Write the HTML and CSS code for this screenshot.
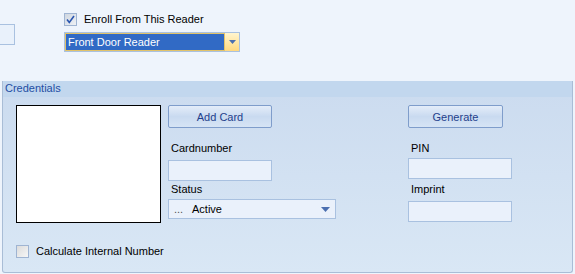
FILE: index.html
```html
<!DOCTYPE html>
<html lang="en">
<head>
  <meta charset="UTF-8" />
  <title>Enroll Card</title>
  <link rel="stylesheet" href="styles.css">
</head>
<body>
  <div class="top">
    <div class="stub"></div>
    <div class="enroll">
      <label class="check">
        <span class="box checked">
          <svg width="11" height="11" viewBox="0 0 11 11"><path d="M2 5.5 L4.3 8.5 L9 2" fill="none" stroke="#2a56b0" stroke-width="1.6"/></svg>
        </span>
        Enroll From This Reader
      </label>
      <div class="combo focus">
        <span class="combo-text">Front Door Reader</span>
        <span class="drop">
          <svg width="7" height="4" viewBox="0 0 7 4"><path d="M0 0 H7 L3.5 4 Z" fill="#4b6fb0"/></svg>
        </span>
      </div>
    </div>
  </div>

  <!-- Credentials group -->
  <section class="panel">
    <div class="panel-head">Credentials</div>
    <div class="panel-body">
      <div class="row">
        <div class="picture"></div>
        <div class="col col-card">
          <button class="btn">Add Card</button>
          <div class="lbl lbl-card">Cardnumber</div>
          <div class="field"></div>
          <div class="lbl lbl-status">Status</div>
          <div class="status">
            <span class="dots">...</span>
            <span class="status-text">Active</span>
            <svg class="arrow" width="9" height="5" viewBox="0 0 9 5"><path d="M0 0 H9 L4.5 5 Z" fill="#4b6fb0"/></svg>
          </div>
        </div>
        <div class="col col-pin">
          <button class="btn btn-gen">Generate</button>
          <div class="lbl lbl-pin">PIN</div>
          <div class="field field-pin"></div>
          <div class="lbl lbl-imprint">Imprint</div>
          <div class="field field-imprint"></div>
        </div>
      </div>
      <label class="check calc">
        <span class="box"></span>
        Calculate Internal Number
      </label>
    </div>
  </section>
</body>
</html>
```

FILE: styles.css
```css
body {
  margin: 0;
  background: #eef4fc;
  font-family: "Liberation Sans", Arial, sans-serif;
  font-size: 11px;
  color: #000;
  height: 274px;
  overflow: hidden;
}
.top {
  display: flex;
  height: 81px;
}
.stub {
  width: 14px;
  height: 19px;
  margin-top: 24px;
  border: 1px solid #a9c1e0;
  border-left: none;
  background: #e9f1fb;
}
.enroll {
  margin-left: 49px;
  padding-top: 13px;
}
.check {
  display: flex;
  align-items: center;
  gap: 7px;
  height: 13px;
  line-height: 13px;
}
.box {
  width: 11px;
  height: 11px;
  border: 1px solid #9fb4d2;
  background: linear-gradient(135deg, #dcdcdc, #f6f6f6);
  display: flex;
  align-items: center;
  justify-content: center;
}
.box.checked {
  background: linear-gradient(135deg, #cfd6e0, #eef1f5);
}
.combo {
  margin-top: 6px;
  width: 174px;
  height: 18px;
  border: 1px solid #a9c1e0;
  display: flex;
  background: #eaf1fb;
}
.combo-text {
  flex: 1;
  background: #316ac5;
  color: #fff;
  border: 1px dotted #000;
  outline: 1px solid #e2c36a;
  outline-offset: -1px;
  padding-left: 2px;
  line-height: 16px;
}
.drop {
  width: 14px;
  background: linear-gradient(#fff5cf, #ffd980);
  display: flex;
  align-items: center;
  justify-content: center;
}

.panel {
  margin: 0 2px;
  height: 191px;
  border: 1px solid #a9bdd6;
  border-top: none;
  border-radius: 0 0 3px 3px;
  background: linear-gradient(#cbdbef, #d9e7f5);
}
.panel-head {
  height: 16px;
  line-height: 15px;
  padding-left: 2px;
  background: #c2d7ee;
  color: #1f4ea3;
}
.panel-body {
  padding: 8px 0 0 13px;
}
.row {
  display: flex;
}
.picture {
  width: 143px;
  height: 116px;
  background: #fff;
  border: 1px solid #000;
}
.col {
  display: flex;
  flex-direction: column;
}
.col-card {
  margin-left: 7px;
  width: 168px;
}
.col-pin {
  margin-left: 72px;
  width: 104px;
}
.btn {
  width: 104px;
  height: 23px;
  border: 1px solid #7f9dcb;
  border-radius: 2px;
  background: linear-gradient(#e4edf9, #c9daf0 50%, #d6e4f5);
  color: #1f3f8c;
  font: inherit;
  padding: 0;
}
.btn-gen {
  width: 95px;
}
.lbl {
  height: 13px;
  line-height: 13px;
  padding-left: 3px;
}
.lbl-card { margin-top: 14px; margin-bottom: 5px; }
.lbl-status { margin-top: 2px; margin-bottom: 3px; }
.lbl-pin { margin-top: 14px; margin-bottom: 3px; }
.lbl-imprint { margin-top: 4px; margin-bottom: 5px; }
.field {
  width: 102px;
  height: 19px;
  border: 1px solid #a9c1e0;
  background: #eaf1fb;
}
.status {
  width: 166px;
  height: 18px;
  border: 1px solid #a9c1e0;
  background: #eaf1fb;
  display: flex;
  align-items: center;
}
.dots {
  color: #555;
  margin-left: 5px;
  width: 18px;
}
.status-text {
  flex: 1;
}
.arrow {
  margin-right: 5px;
}
.calc {
  margin-top: 22px;
}
```
